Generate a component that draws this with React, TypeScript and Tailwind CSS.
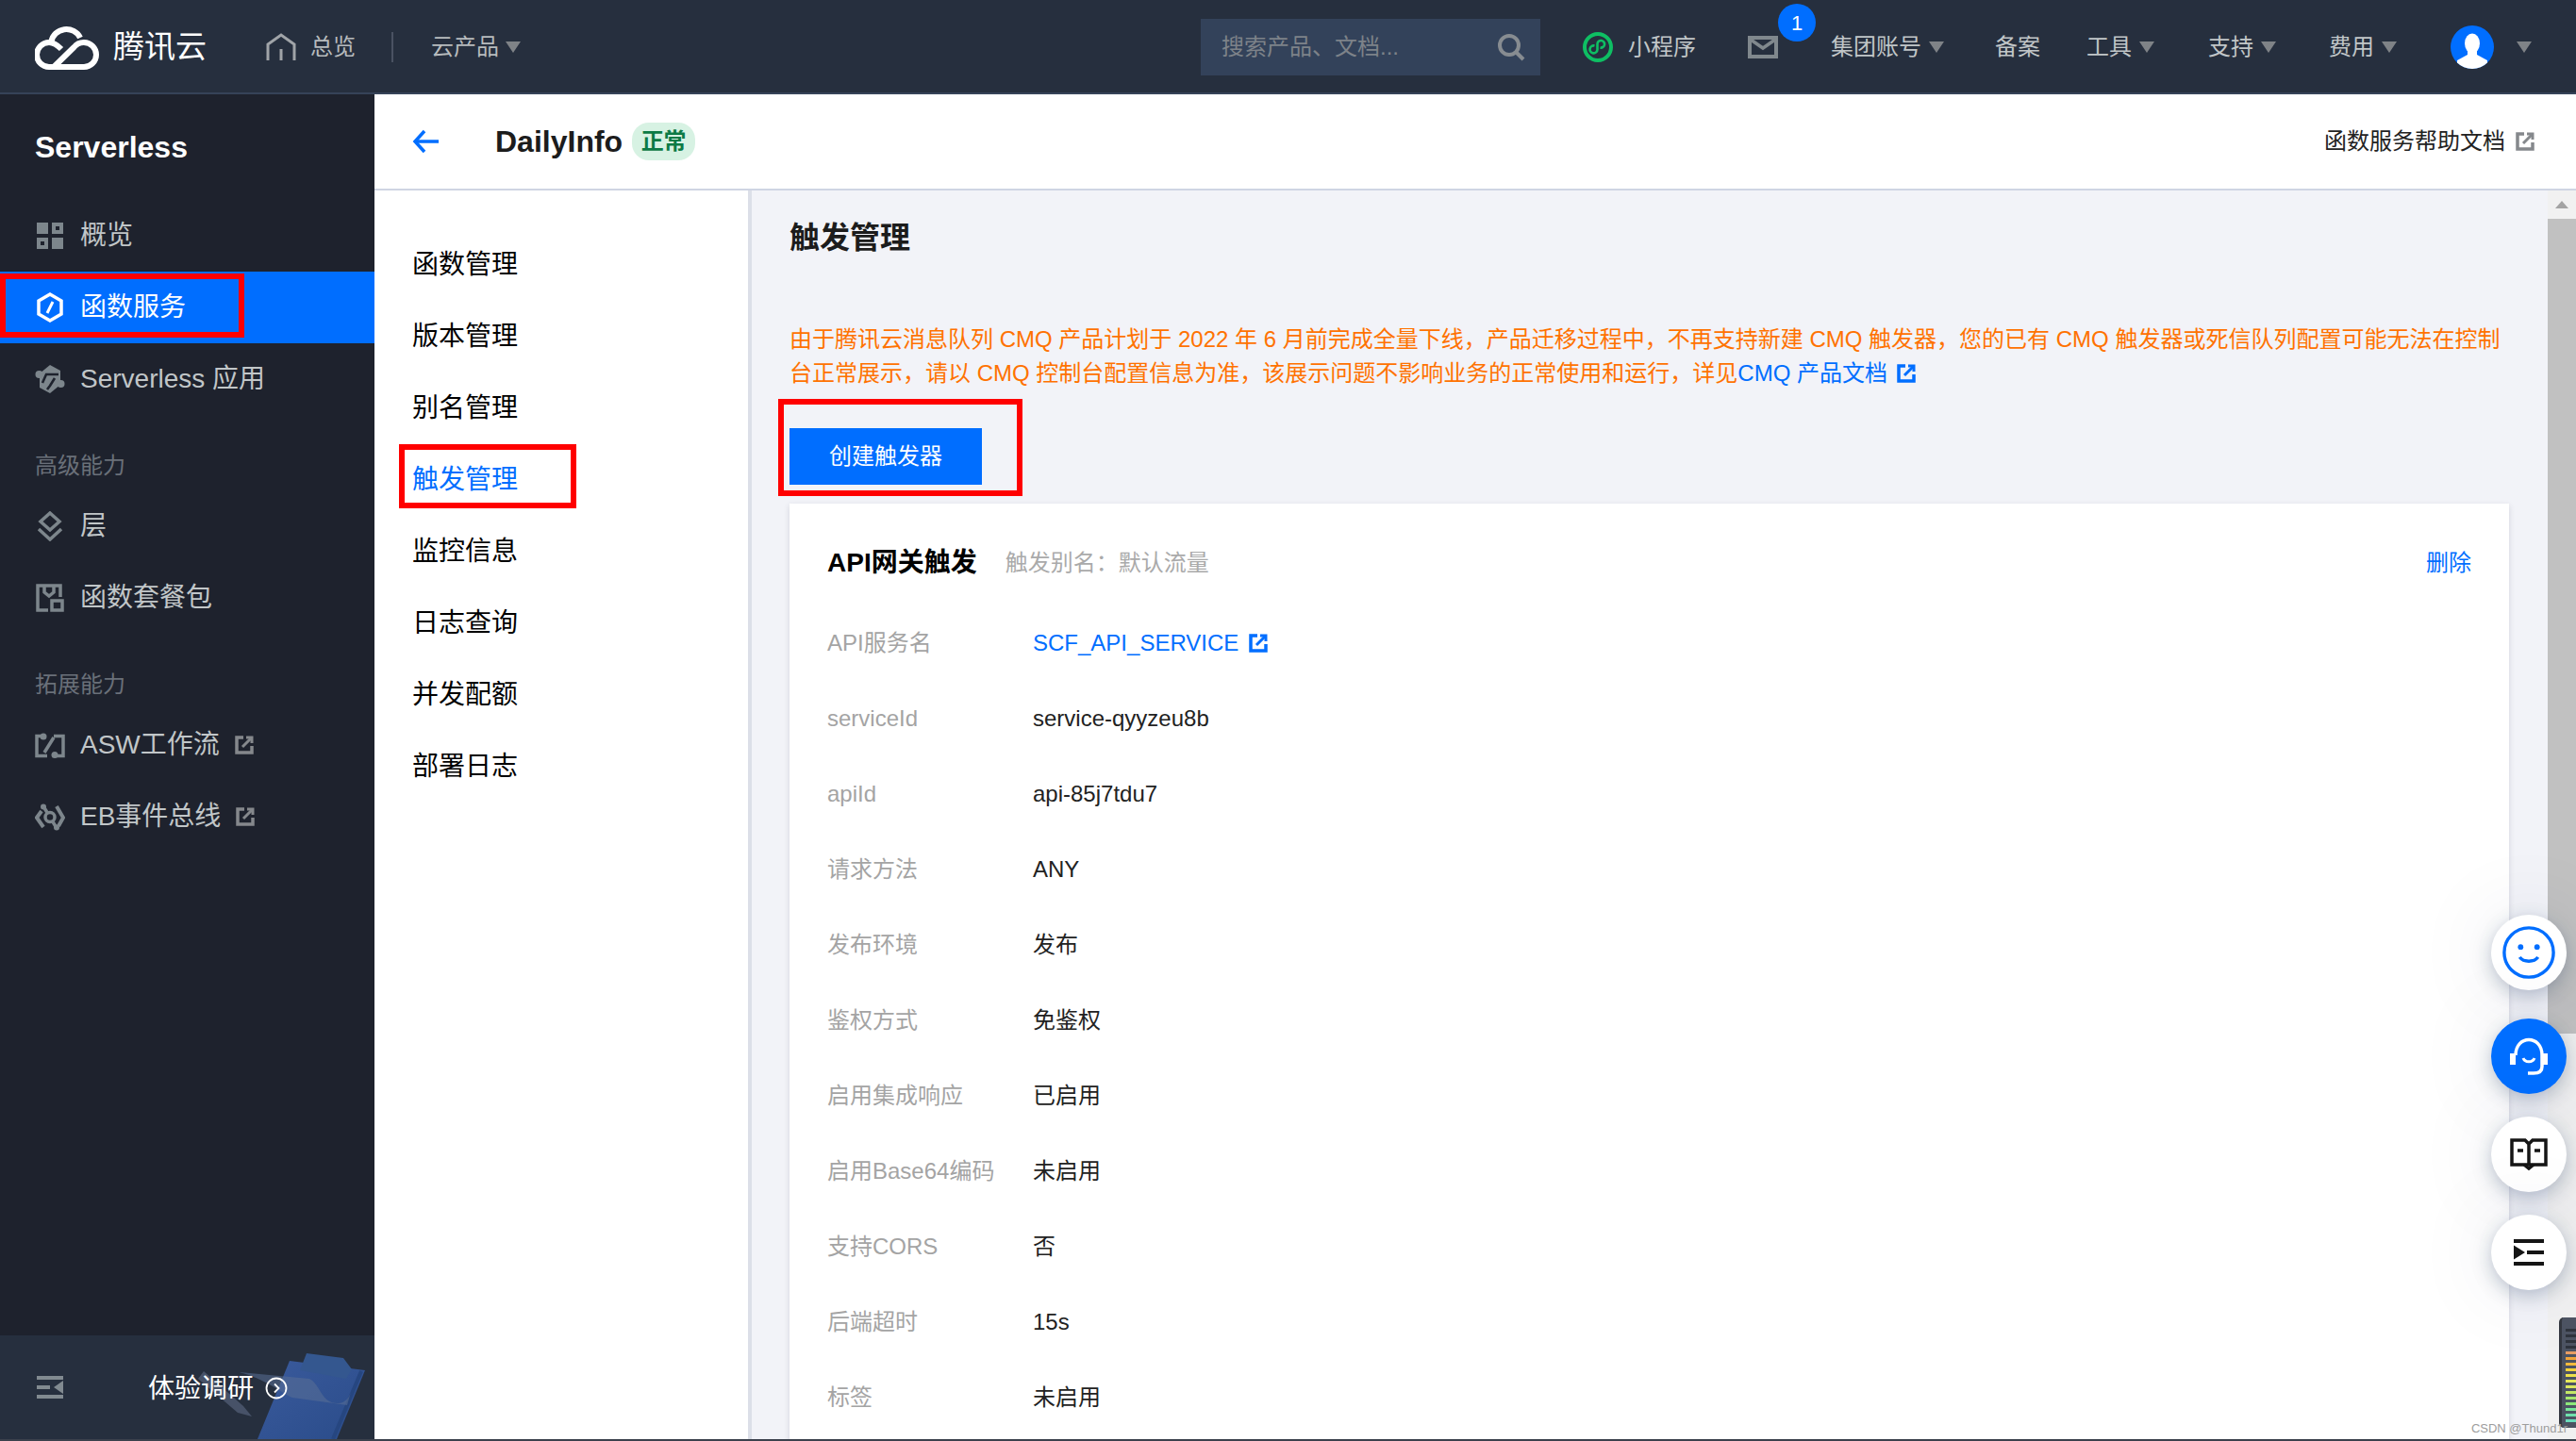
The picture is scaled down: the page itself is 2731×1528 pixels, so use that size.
import React from 'react';

const FONT = 'font-["Liberation_Sans","Noto_Sans_CJK_SC",sans-serif]';

const Caret = ({ className = '' }: { className?: string }) => (
  <svg viewBox="0 0 16 12" className={`w-[16px] h-[12px] ${className}`} fill="#7f8387">
    <path d="M0 0h16L8 12z" />
  </svg>
);

const External = ({ color = '#85888c', className = '' }: { color?: string; className?: string }) => (
  <svg viewBox="0 0 20 20" className={`w-[20px] h-[20px] ${className}`} fill="none" stroke={color} strokeWidth="3.500">
    <path d="M9 2H2v16h16v-7" />
    <path d="M18 2L8 12" strokeWidth="3" />
    <path d="M12 2h6v6" strokeWidth="3" />
  </svg>
);

const Logo = () => (
  <svg viewBox="0 0 68 48" className="w-[68px] h-[48px]" fill="none" stroke="#fff" strokeWidth="6">
    <path d="M20 45L41.500 24A13 13 0 0 1 52 19A13 13 0 0 1 52 45H15A13 13 0 0 1 15 19C20 19 24 22 28 26" strokeLinejoin="round" />
    <path d="M17.500 18A16 15 0 0 1 48 14" />
  </svg>
);

const SideIcon = ({ name }: { name: string }) => {
  const c = '#7d868c';
  if (name === 'grid')
    return (
      <svg viewBox="0 0 28 28" className="w-[28px] h-[28px]" fill={c}>
        <rect x="0" y="0" width="12" height="12" />
        <path fillRule="evenodd" d="M16 0h12v12H16zM20 4v4h4V4z" />
        <path fillRule="evenodd" d="M0 16h12v12H0zM4 20v4h4v-4z" />
        <rect x="16" y="16" width="12" height="12" />
      </svg>
    );
  if (name === 'fn')
    return (
      <svg viewBox="0 0 28 32" className="w-[28px] h-[32px]" fill="none" stroke="#fff" strokeWidth="3.500">
        <path d="M14 2l12 7v14l-12 7-12-7V9z" />
        <path d="M17 10l-6 12" strokeWidth="3" />
      </svg>
    );
  if (name === 'app')
    return (
      <svg viewBox="0 0 32 32" className="w-[32px] h-[32px]">
        <path d="M16 1l11 6v15l-11 9-11-6V10z" fill={c} />
        <path d="M8 20l4-9h13M13 27l3-4 5-8" fill="none" stroke="#1e222d" strokeWidth="2.600" />
        <circle cx="4.500" cy="11" r="4" fill={c} />
        <circle cx="27.500" cy="21" r="4" fill={c} />
      </svg>
    );
  if (name === 'layer')
    return (
      <svg viewBox="0 0 28 32" className="w-[28px] h-[32px]" fill="none" stroke={c} strokeWidth="3.500">
        <path d="M14 2l10 9-10 9-10-9z" />
        <path d="M2 19l12 11 12-11" />
      </svg>
    );
  if (name === 'pkg')
    return (
      <svg viewBox="0 0 30 30" className="w-[30px] h-[30px]" fill="none" stroke={c} strokeWidth="3.500">
        <path d="M13 28H2V2h24v12" />
        <path d="M9 3v6l5 4 5-4V3" />
        <rect x="17" y="18" width="11" height="10" />
      </svg>
    );
  if (name === 'flow')
    return (
      <svg viewBox="0 0 32 27" className="w-[32px] h-[27px]" fill="none" stroke={c} strokeWidth="3.500">
        <path d="M9 3.500H2v21h11" />
        <path d="M20 3.500h10v21h-9" />
        <path d="M10 21l10-16" />
        <circle cx="9" cy="4" r="3.500" fill={c} stroke="none" />
        <circle cx="21" cy="23.500" r="3.500" fill={c} stroke="none" />
      </svg>
    );
  return (
    <svg viewBox="0 0 32 29" className="w-[32px] h-[29px]" fill="none" stroke={c} strokeWidth="4">
      <path d="M7 8l-5 7 7 10" />
      <path d="M23 3l7 12-5 9" />
      <path d="M9 3l14 23" strokeWidth="3.500" />
      <circle cx="16" cy="14.500" r="5" fill="#1e222d" strokeWidth="3.500" />
      <circle cx="9" cy="3.500" r="3" fill={c} stroke="none" />
      <circle cx="23" cy="25.500" r="3" fill={c} stroke="none" />
    </svg>
  );
};

const SideItem = ({ icon, label, active, ext }: { icon: string; label: string; active?: boolean; ext?: boolean }) => (
  <div className={`h-[76px] pl-[37px] flex items-center ${active ? 'bg-[#006eff] text-white' : 'text-[#c1c6c8]'}`}>
    <div className="w-[32px] flex justify-center shrink-0">
      <SideIcon name={icon} />
    </div>
    <span className="ml-[16px] text-[28px]">{label}</span>
    {ext && <External className="ml-[16px]" />}
  </div>
);

const NavText = ({ label, caret, className = '' }: { label: string; caret?: boolean; className?: string }) => (
  <div className={`flex items-center text-[24px] text-[#c1c6c8] ${className}`}>
    <span>{label}</span>
    {caret && <Caret className="ml-[8px]" />}
  </div>
);

const rows: [string, string][] = [
  ['serviceId', 'service-qyyzeu8b'],
  ['apiId', 'api-85j7tdu7'],
  ['请求方法', 'ANY'],
  ['发布环境', '发布'],
  ['鉴权方式', '免鉴权'],
  ['启用集成响应', '已启用'],
  ['启用Base64编码', '未启用'],
  ['支持CORS', '否'],
  ['后端超时', '15s'],
  ['标签', '未启用'],
];

const subNav = ['函数管理', '版本管理', '别名管理', '触发管理', '监控信息', '日志查询', '并发配额', '部署日志'];

const meter = ['#2e333c', '#2e333c', '#2e333c', '#2e333c', '#e89c63', '#f0a33b', '#f3b93c', '#f3d13c', '#eee04a', '#e6e85b', '#dbe85f', '#c4e866', '#a6e86e', '#8ce87a', '#78e69a', '#6fe0ac', '#6cdcbc'];

const FloatBtn = ({ blue, className = '', children }: { blue?: boolean; className?: string; children: React.ReactNode }) => (
  <div
    className={`w-[80px] h-[80px] rounded-full flex items-center justify-center shadow-[0_6px_20px_rgba(30,50,90,0.28),0_0_90px_rgba(30,50,90,0.10)] ${
      blue ? 'bg-[#006eff]' : 'bg-white'
    } ${className}`}
  >
    {children}
  </div>
);

export default function App() {
  return (
    <div className={`${FONT} relative w-[2731px] h-[1528px] overflow-hidden flex flex-col border-b-2 border-[#3b414c] bg-white`}>
      {/* top bar */}
      <header className="h-[100px] shrink-0 bg-[#262f3e] border-b-[2px] border-[#364358] flex items-center pl-[37px] pt-[2px]">
        <Logo />
        <span className="ml-[15px] text-[33px] text-white">腾讯云</span>
        <svg viewBox="0 0 32 30" className="w-[32px] h-[30px] ml-[63px]" fill="none" stroke="#a0a4a8" strokeWidth="3">
          <path d="M2 29V12L16 2l14 10v17" />
          <path d="M16 17v12" />
        </svg>
        <span className="ml-[15px] text-[24px] text-[#b7bbbd]">总览</span>
        <div className="ml-[38px] w-[2px] h-[32px] bg-[#4a5262]" />
        <span className="ml-[40px] text-[24px] text-[#b7bbbd]">云产品</span>
        <Caret className="ml-[7px]" />

        <div className="ml-[721px] w-[360px] h-[60px] bg-[#33425a] flex items-center pl-[22px] pr-[16px]">
          <span className="text-[24px] text-[#7d8289]">搜索产品、文档...</span>
          <svg viewBox="0 0 30 30" className="ml-auto w-[30px] h-[30px]" fill="none" stroke="#878c91" strokeWidth="4">
            <circle cx="13" cy="13" r="10" />
            <path d="M20 20l8 8" />
          </svg>
        </div>

        <svg viewBox="0 0 32 32" className="ml-[45px] w-[32px] h-[32px]" fill="none" stroke="#0ebf63">
          <circle cx="16" cy="16" r="14" strokeWidth="4" />
          <path d="M12.500 14.500a4 4 0 1 0 3 4v-6a3.800 3.800 0 1 1 3 4" strokeWidth="2.600" />
        </svg>
        <NavText label="小程序" className="ml-[16px]" />
        <div className="relative ml-[55px] w-[32px] h-[24px]">
          <svg viewBox="0 0 32 24" className="w-[32px] h-[24px]" fill="none" stroke="#80888d" strokeWidth="4">
            <rect x="2" y="2" width="28" height="20" />
            <path d="M3 4l13 9 13-9" strokeWidth="3.500" />
          </svg>
          <div className="absolute left-[32px] top-[-34px] w-[40px] h-[40px] rounded-full bg-[#006eff] text-white text-[22px] flex items-center justify-center">
            1
          </div>
        </div>
        <NavText label="集团账号" caret className="ml-[56px]" />
        <NavText label="备案" className="ml-[54px]" />
        <NavText label="工具" caret className="ml-[49px]" />
        <NavText label="支持" caret className="ml-[57px]" />
        <NavText label="费用" caret className="ml-[56px]" />
        <svg viewBox="0 0 46 46" className="ml-[57px] w-[46px] h-[46px]">
          <circle cx="23" cy="23" r="23" fill="#006eff" />
          <clipPath id="av">
            <circle cx="23" cy="23" r="23" />
          </clipPath>
          <g clipPath="url(#av)" fill="#fff">
            <ellipse cx="23" cy="19" rx="8" ry="10.500" />
            <path d="M18 27h10v4l11 6v9H7v-9l11-6z" />
          </g>
        </svg>
        <Caret className="ml-[24px]" />
      </header>

      <div className="flex-1 flex min-h-0">
        {/* left sidebar */}
        <aside className="relative w-[397px] shrink-0 bg-[#1e222d] flex flex-col">
          <div className="h-[112px] pl-[37px] flex items-center text-[32px] font-bold text-white">Serverless</div>
          <SideItem icon="grid" label="概览" />
          <SideItem icon="fn" label="函数服务" active />
          <SideItem icon="app" label="Serverless 应用" />
          <div className="h-[52px] mt-[28px] pl-[37px] flex items-center text-[24px] text-[#6a7079]">高级能力</div>
          <SideItem icon="layer" label="层" />
          <SideItem icon="pkg" label="函数套餐包" />
          <div className="h-[52px] mt-[28px] pl-[37px] flex items-center text-[24px] text-[#6a7079]">拓展能力</div>
          <SideItem icon="flow" label="ASW工作流" ext />
          <SideItem icon="bus" label="EB事件总线" ext />

          <div className="relative mt-auto h-[110px] bg-[#262f3e] overflow-hidden flex items-center">
            <svg viewBox="0 0 197 110" className="absolute left-[200px] top-0 w-[197px] h-[110px]">
              <defs>
                <linearGradient id="board" x1="0" y1="0" x2="1" y2="1">
                  <stop offset="0" stopColor="#3a5a9c" />
                  <stop offset="1" stopColor="#2a4c8a" />
                </linearGradient>
              </defs>
              <path d="M10 46L16 38L58 75L67 86L52 82z" fill="#475268" />
              <path d="M73 110L107 27L187 37L157 110z" fill="url(#board)" />
              <path d="M183 38L153 110" stroke="#264680" strokeWidth="4" fill="none" />
              <path d="M125 19L164 24L173 36L167 46L118 37z" fill="#34578f" />
              <path d="M53 39L128 46C140 52 140 72 158 72C166 72 170 66 172 60L168 74L110 66C100 62 80 45 53 39z" fill="#5a6f96" opacity="0.55" />
            </svg>
            <svg viewBox="0 0 28 24" className="ml-[39px] w-[28px] h-[24px]" fill="#818a90">
              <rect x="0" y="0" width="28" height="4" />
              <rect x="0" y="10" width="14" height="4" />
              <path d="M28 5v14l-10-7z" />
              <rect x="0" y="20" width="28" height="4" />
            </svg>
            <span className="relative ml-[90px] mt-[4px] text-[28px] text-white">体验调研</span>
            <svg viewBox="0 0 24 24" className="relative ml-[12px] mt-[2px] w-[24px] h-[24px]" fill="none" stroke="#fff" strokeWidth="1.800">
              <circle cx="12" cy="12" r="10.500" />
              <path d="M10 7.500l4.500 4.500-4.500 4.500" />
            </svg>
          </div>

          {/* annotation box */}
          <div className="absolute left-0 top-[190px] w-[259px] h-[68px] border-[6px] border-[#ff0000]" />
        </aside>

        <div className="flex-1 flex flex-col min-w-0">
          {/* page head */}
          <div className="h-[102px] shrink-0 bg-white border-b-[2px] border-[#cfd5e3] flex items-center pl-[40px] pr-[44px]">
            <svg viewBox="0 0 28 26" className="w-[28px] h-[26px]" fill="none" stroke="#006eff" strokeWidth="3.500">
              <path d="M28 13H4" />
              <path d="M13 2L3 13l10 11" />
            </svg>
            <span className="ml-[60px] text-[32px] font-bold text-[#1c1c1c]">DailyInfo</span>
            <span className="ml-[10px] h-[40px] w-[67px] rounded-[18px] bg-[#d7f2e3] text-[#0c7a45] text-[24px] font-bold flex items-center justify-center">
              正常
            </span>
            <span className="ml-auto text-[24px] text-[#222]">函数服务帮助文档</span>
            <External className="ml-[11px]" />
          </div>

          <div className="flex-1 flex min-h-0">
            {/* second nav */}
            <nav className="relative w-[400px] shrink-0 bg-white border-r-[4px] border-[#dcdfe8] pt-[41px]">
              {subNav.map((s) => (
                <div
                  key={s}
                  className={`h-[76px] pl-[40px] flex items-center text-[28px] ${s === '触发管理' ? 'text-[#006eff]' : 'text-black'}`}
                >
                  {s}
                </div>
              ))}
              <div className="absolute left-[26px] top-[269px] w-[188px] h-[68px] border-[6px] border-[#ff0000]" />
            </nav>

            {/* content */}
            <main className="relative flex-1 min-w-0 bg-[#f2f3f8] pl-[40px] overflow-hidden">
              <h2 className="h-[100px] flex items-center text-[32px] font-bold text-[#1c1c1c]">触发管理</h2>
              <p className="mt-[40px] w-[1830px] text-[24px] leading-[36px] text-[#ff7200]">
                由于腾讯云消息队列 CMQ 产品计划于 2022 年 6 月前完成全量下线，产品迁移过程中，不再支持新建 CMQ 触发器，您的已有 CMQ 触发器或死信队列配置可能无法在控制台正常展示，请以 CMQ 控制台配置信息为准，该展示问题不影响业务的正常使用和运行，详见
                <span className="text-[#006eff]">CMQ 产品文档</span>
                <External color="#006eff" className="inline-block ml-[10px] align-[-2px]" />
              </p>
              <button className="mt-[40px] block w-[204px] h-[60px] bg-[#006eff] text-white text-[24px]">创建触发器</button>

              <section className="mt-[20px] w-[1823px] bg-white shadow-[0_2px_6px_rgba(54,58,80,0.16)] pl-[40px] pr-[40px] pt-[40px] pb-[40px]">
                <div className="flex items-center h-[46px]">
                  <span className="text-[28px] font-bold text-black">API网关触发</span>
                  <span className="ml-[30px] text-[24px] text-[#aaa]">触发别名：默认流量</span>
                  <span className="ml-auto text-[24px] text-[#006eff]">删除</span>
                </div>
                <div className="mt-[22px] flex items-center h-[80px] text-[24px]">
                  <span className="w-[218px] text-[#a4a4a4]">API服务名</span>
                  <span className="text-[#006eff]">SCF_API_SERVICE</span>
                  <External color="#006eff" className="ml-[11px]" />
                </div>
                {rows.map(([k, v]) => (
                  <div key={k} className="flex items-center h-[80px] text-[24px]">
                    <span className="w-[218px] text-[#a4a4a4]">{k}</span>
                    <span className="text-[#222]">{v}</span>
                  </div>
                ))}
              </section>

              {/* fake scrollbar */}
              <div className="absolute right-0 top-0 bottom-0 w-[30px] bg-[#f1f1f1] flex flex-col items-center">
                <div className="h-[30px] shrink-0 flex items-center justify-center">
                  <svg viewBox="0 0 14 8" className="w-[14px] h-[8px]" fill="#a3a3a3">
                    <path d="M7 0l7 8H0z" />
                  </svg>
                </div>
                <div className="w-full h-[864px] bg-[#c1c1c1]" />
              </div>

              {/* floating buttons */}
              <div className="absolute right-[10px] top-[768px] flex flex-col gap-[24px]">
                <FloatBtn>
                  <svg viewBox="0 0 60 60" className="w-[58px] h-[58px]" fill="none" stroke="#006eff" strokeWidth="3.500">
                    <circle cx="30" cy="30" r="27" />
                    <circle cx="21" cy="24" r="3" fill="#006eff" stroke="none" />
                    <circle cx="39" cy="24" r="3" fill="#006eff" stroke="none" />
                    <path d="M20 35c4 6 16 6 20 0" />
                  </svg>
                </FloatBtn>
                <FloatBtn blue className="mt-[6px]">
                  <svg viewBox="0 0 42 42" className="w-[42px] h-[42px]" fill="none" stroke="#fff" strokeWidth="3.500">
                    <path d="M7 20c0-22 28-22 28 0v12c0 5-4 7-9 7h-6" />
                    <rect x="1" y="18" width="6" height="12" fill="#fff" stroke="none" />
                    <rect x="35" y="18" width="6" height="12" fill="#fff" stroke="none" />
                    <path d="M15 23c2 5 10 5 12 0" strokeWidth="3" />
                  </svg>
                </FloatBtn>
                <FloatBtn>
                  <svg viewBox="0 0 40 34" className="w-[40px] h-[34px]" fill="none" stroke="#151515" strokeWidth="3.500">
                    <path d="M20 6V28H2V2h14l4 4 4-4h14v26H20" />
                    <path d="M8 13h6M26 13h6" />
                    <path d="M15 28l5 4 5-4" />
                  </svg>
                </FloatBtn>
                <FloatBtn>
                  <svg viewBox="0 0 32 28" className="w-[32px] h-[28px]" fill="#151515">
                    <rect x="0" y="0" width="32" height="4" />
                    <rect x="14" y="12" width="18" height="4" />
                    <rect x="0" y="24" width="32" height="4" />
                    <path d="M0 6.500v15L12 14z" />
                  </svg>
                </FloatBtn>
              </div>

              {/* level meter widget */}
              <div className="absolute right-0 top-[1195px] w-[18px] h-[117px] bg-[#4c5362] rounded-l-[5px] border-l-[3px] border-[#33373f] pl-[4px] pt-[12px] flex flex-col gap-[3px]">
                {meter.map((c, i) => (
                  <div key={i} className="h-[3px] w-full shrink-0" style={{ backgroundColor: c }} />
                ))}
              </div>
              <div className="absolute right-[9px] top-[1303px] text-[13px] text-[#9d9d9d] whitespace-nowrap">
                CSDN @Thund1r
              </div>

              {/* annotation box */}
              <div className="absolute left-[28px] top-[221px] w-[259px] h-[103px] border-[6px] border-[#ff0000]" />
            </main>
          </div>
        </div>
      </div>
    </div>
  );
}
